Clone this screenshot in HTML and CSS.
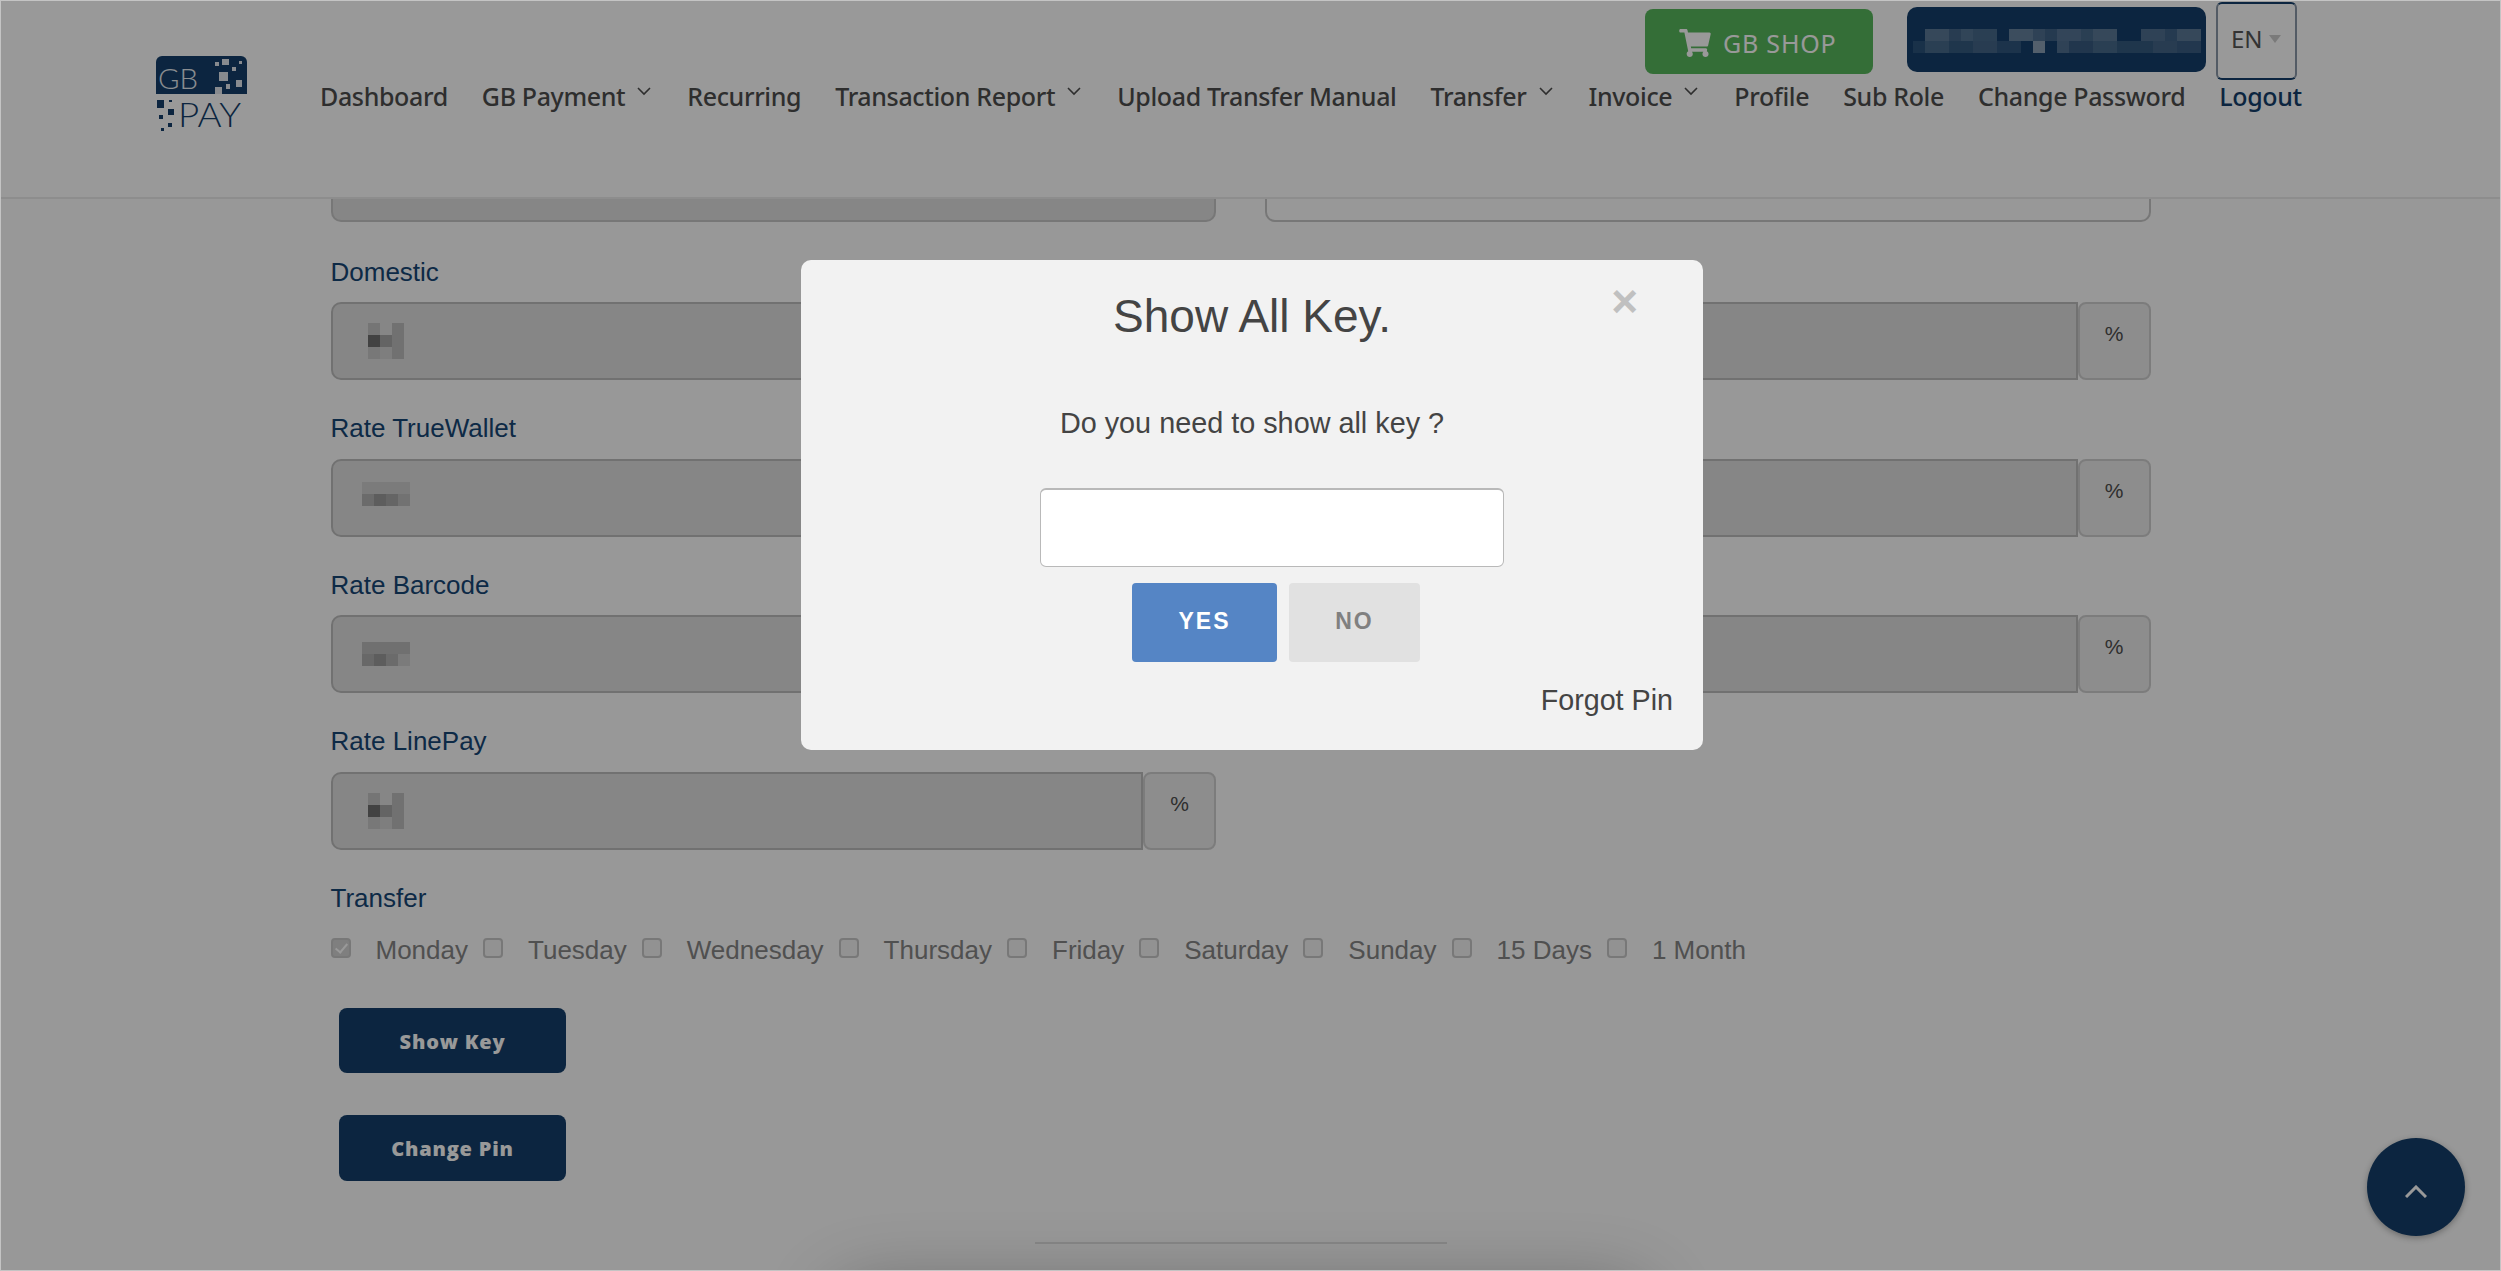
FILE: index.html
```html
<!DOCTYPE html>
<html lang="en">
<head>
<meta charset="utf-8">
<title>Show All Key</title>
<link rel="stylesheet" href="styles.css">
</head>
<body>
<header class="topbar">
  <svg class="logo" viewBox="0 0 91 76" aria-label="GB Pay">
    <path class="logo-bg" d="M0 38V6a6 6 0 0 1 6-6h79a6 6 0 0 1 6 6v32z"/>
    <text class="logo-gb" x="2" y="33" textLength="40" lengthAdjust="spacingAndGlyphs">GB</text>
    <g class="logo-light">
      <rect x="59" y="6" width="4" height="4"/><rect x="66" y="3" width="7" height="6"/><rect x="83" y="5" width="3" height="3"/>
      <rect x="76" y="11" width="4" height="4"/><rect x="63" y="16" width="9" height="9"/><rect x="70" y="28" width="4" height="5"/>
      <rect x="80" y="24" width="6" height="7"/><rect x="59" y="31" width="7" height="7"/>
    </g>
    <g class="logo-dark">
      <rect x="1" y="44" width="7" height="8"/><rect x="13" y="44" width="3" height="2"/><rect x="12" y="53" width="6" height="6"/>
      <rect x="3" y="59" width="4" height="4"/><rect x="12" y="67" width="4" height="4"/><rect x="5" y="72" width="3" height="3"/>
    </g>
    <text class="logo-pay" x="22" y="71" textLength="63" lengthAdjust="spacingAndGlyphs">PAY</text>
  </svg>
  <div class="topbar-main">
    <div class="utilities">
      <a class="shop-btn">
        <svg class="cart" viewBox="0 0 576 512"><path d="M528.12 301.319l47.273-208C578.806 78.301 567.391 64 551.99 64H159.208l-9.166-44.81C147.758 8.021 137.93 0 126.529 0H24C10.745 0 0 10.745 0 24v16c0 13.255 10.745 24 24 24h69.883l70.248 343.435C147.325 417.1 136 435.222 136 456c0 30.928 25.072 56 56 56s56-25.072 56-56c0-15.674-6.447-29.835-16.824-40h209.647C430.447 426.165 424 440.326 424 456c0 30.928 25.072 56 56 56s56-25.072 56-56c0-22.172-12.888-41.332-31.579-50.405l5.517-24.276c3.413-15.018-8.002-29.319-23.403-29.319H218.117l-6.545-32h293.145c11.206 0 20.92-7.754 23.403-18.681z"/></svg>
        GB SHOP
      </a>
      <div class="account">
        <svg class="mosaic" viewBox="0 0 288 24" width="288" height="24">
          <g fill="#fff">
            <rect x="12" y="0" width="24" height="12" opacity=".3"/><rect x="36" y="0" width="12" height="12" opacity=".2"/><rect x="48" y="0" width="12" height="12" opacity=".27"/><rect x="60" y="0" width="24" height="12" opacity=".22"/>
            <rect x="96" y="0" width="24" height="12" opacity=".34"/><rect x="120" y="0" width="12" height="12" opacity=".25"/><rect x="132" y="0" width="12" height="12" opacity=".18"/><rect x="144" y="0" width="24" height="12" opacity=".28"/><rect x="168" y="0" width="12" height="12" opacity=".22"/><rect x="180" y="0" width="24" height="12" opacity=".3"/>
            <rect x="228" y="0" width="24" height="12" opacity=".25"/><rect x="252" y="0" width="12" height="12" opacity=".18"/><rect x="264" y="0" width="24" height="12" opacity=".3"/>
            <rect x="0" y="12" width="12" height="12" opacity=".1"/><rect x="12" y="12" width="24" height="12" opacity=".22"/><rect x="36" y="12" width="24" height="12" opacity=".14"/><rect x="60" y="12" width="24" height="12" opacity=".2"/><rect x="84" y="12" width="24" height="12" opacity=".12"/>
            <rect x="120" y="12" width="12" height="12" opacity=".5"/><rect x="144" y="12" width="12" height="12" opacity=".25"/><rect x="156" y="12" width="24" height="12" opacity=".15"/><rect x="180" y="12" width="24" height="12" opacity=".22"/><rect x="204" y="12" width="36" height="12" opacity=".14"/><rect x="240" y="12" width="24" height="12" opacity=".2"/><rect x="264" y="12" width="24" height="12" opacity=".16"/>
          </g>
        </svg>
      </div>
      <div class="lang"><span>EN</span><i class="caret"></i></div>
    </div>
    <nav class="nav">
      <a>Dashboard</a>
      <a>GB Payment<svg class="chev" viewBox="0 0 14 9"><path d="M1 1l6 6 6-6"/></svg></a>
      <a>Recurring</a>
      <a>Transaction Report<svg class="chev" viewBox="0 0 14 9"><path d="M1 1l6 6 6-6"/></svg></a>
      <a>Upload Transfer Manual</a>
      <a>Transfer<svg class="chev" viewBox="0 0 14 9"><path d="M1 1l6 6 6-6"/></svg></a>
      <a>Invoice<svg class="chev" viewBox="0 0 14 9"><path d="M1 1l6 6 6-6"/></svg></a>
      <a>Profile</a>
      <a>Sub Role</a>
      <a>Change Password</a>
      <a class="logout">Logout</a>
    </nav>
  </div>
</header>

<main class="content">
  <div class="fields">
    <div class="cut cut-filled"></div>
    <div class="cut"></div>

    <div class="field">
      <label>Domestic</label>
      <div class="group">
        <div class="value">
          <svg class="blur" width="36" height="36" viewBox="0 0 3 3"><rect width="1" height="1" fill="#000" opacity=".12"/><rect x="2" width="1" height="1" fill="#000" opacity=".15"/><rect y="1" width="1" height="1" fill="#000" opacity=".5"/><rect x="1" y="1" width="1" height="1" fill="#000" opacity=".25"/><rect x="2" y="1" width="1" height="1" fill="#000" opacity=".15"/><rect y="2" width="1" height="1" fill="#000" opacity=".1"/><rect x="1" y="2" width="1" height="1" fill="#000" opacity=".05"/><rect x="2" y="2" width="1" height="1" fill="#000" opacity=".15"/></svg>
        </div>
        <span class="addon"></span>
      </div>
    </div>
    <div class="field">
      <label>&nbsp;</label>
      <div class="group"><div class="value"></div><span class="addon">%</span></div>
    </div>

    <div class="field">
      <label>Rate TrueWallet</label>
      <div class="group">
        <div class="value tight tw">
          <svg class="blur" width="48" height="24" viewBox="0 0 4 2"><rect width="4" height="1" fill="#000" opacity=".08"/><rect y="1" width="1" height="1" fill="#000" opacity=".2"/><rect x="1" y="1" width="1" height="1" fill="#000" opacity=".3"/><rect x="2" y="1" width="1" height="1" fill="#000" opacity=".24"/><rect x="3" y="1" width="1" height="1" fill="#000" opacity=".14"/></svg>
        </div>
        <span class="addon"></span>
      </div>
    </div>
    <div class="field">
      <label>&nbsp;</label>
      <div class="group"><div class="value"></div><span class="addon">%</span></div>
    </div>

    <div class="field">
      <label>Rate Barcode</label>
      <div class="group">
        <div class="value tight bar">
          <svg class="blur" width="48" height="24" viewBox="0 0 4 2"><rect y="0" width="4" height="1" fill="#000" opacity=".16"/><rect y="1" width="1" height="1" fill="#000" opacity=".22"/><rect x="1" y="1" width="1" height="1" fill="#000" opacity=".3"/><rect x="2" y="1" width="1" height="1" fill="#000" opacity=".2"/><rect x="3" y="1" width="1" height="1" fill="#000" opacity=".08"/></svg>
        </div>
        <span class="addon"></span>
      </div>
    </div>
    <div class="field">
      <label>&nbsp;</label>
      <div class="group"><div class="value"></div><span class="addon">%</span></div>
    </div>

    <div class="field">
      <label>Rate LinePay</label>
      <div class="group">
        <div class="value">
          <svg class="blur" width="36" height="36" viewBox="0 0 3 3"><rect width="1" height="1" fill="#000" opacity=".12"/><rect x="2" width="1" height="1" fill="#000" opacity=".15"/><rect y="1" width="1" height="1" fill="#000" opacity=".5"/><rect x="1" y="1" width="1" height="1" fill="#000" opacity=".25"/><rect x="2" y="1" width="1" height="1" fill="#000" opacity=".15"/><rect y="2" width="1" height="1" fill="#000" opacity=".1"/><rect x="1" y="2" width="1" height="1" fill="#000" opacity=".05"/><rect x="2" y="2" width="1" height="1" fill="#000" opacity=".15"/></svg>
        </div>
        <span class="addon">%</span>
      </div>
    </div>
  </div>

  <section class="transfer">
    <label>Transfer</label>
    <div class="days">
      <span class="day"><input type="checkbox" checked disabled>Monday</span>
      <span class="day"><input type="checkbox" disabled>Tuesday</span>
      <span class="day"><input type="checkbox" disabled>Wednesday</span>
      <span class="day"><input type="checkbox" disabled>Thursday</span>
      <span class="day"><input type="checkbox" disabled>Friday</span>
      <span class="day"><input type="checkbox" disabled>Saturday</span>
      <span class="day"><input type="checkbox" disabled>Sunday</span>
      <span class="day"><input type="checkbox" disabled>15 Days</span>
      <span class="day"><input type="checkbox" disabled>1 Month</span>
    </div>
  </section>

  <div class="actions">
    <button class="action">Show Key</button>
    <button class="action">Change Pin</button>
  </div>

  <footer class="foot">
    <div class="foot-line"></div>
    <div class="foot-glow"></div>
  </footer>
</main>

<button class="to-top" aria-label="Back to top">
  <svg viewBox="0 0 22 13" width="22" height="13"><path d="M1 12L11 2l10 10"/></svg>
</button>

<div class="overlay">
  <div class="modal">
    <span class="close">&times;</span>
    <h2 class="modal-title">Show All Key.</h2>
    <p class="modal-text">Do you need to show all key ?</p>
    <input class="pin" type="password">
    <div class="modal-btns">
      <button class="btn-yes">YES</button>
      <button class="btn-no">NO</button>
    </div>
    <a class="forgot">Forgot Pin</a>
  </div>
</div>
</body>
</html>
```
FILE: styles.css
```css
* { box-sizing: border-box; }
html, body { margin: 0; height: 100%; }
body {
  height: 1271px;
  overflow: hidden;
  background: #fdfdfd;
  color: #4e4e4e;
  font-family: "Liberation Sans", Arial, sans-serif;
}

/* header */
.topbar {
  display: flex;
  align-items: flex-start;
  height: 199px;
  padding: 0 199px 0 156px;
  background: #fff;
  border-bottom: 2px solid #ececec;
  position: relative;
  z-index: 2;
}
.logo { width: 91px; height: 76px; margin-top: 56px; flex: none; overflow: visible; }
.logo-bg { fill: #143f6b; }
.logo-light rect { fill: #e3e8ee; }
.logo-dark rect { fill: #143f6b; }
.logo-gb { font: 300 28px "Lato", "Open Sans", sans-serif; fill: #e8edf2; }
.logo-pay { font: 300 33px "Lato", "Open Sans", sans-serif; fill: #143f6b; }

.topbar-main { flex: 1; min-width: 0; margin-left: 73px; display: flex; flex-direction: column; }
.utilities {
  display: flex;
  justify-content: flex-end;
  align-items: flex-start;
  height: 80px;
  padding-right: 5px;
}
.shop-btn {
  display: flex;
  align-items: center;
  gap: 12px;
  width: 228px;
  height: 65px;
  margin-top: 9px;
  padding: 2px 0 0 34px;
  border-radius: 8px;
  background: #58b75d;
  color: #fff;
  font: 400 25px "Noto Sans", sans-serif;
  letter-spacing: .8px;
}
.cart { width: 32px; height: 28px; fill: #fff; }
.account {
  display: flex;
  align-items: center;
  width: 299px;
  height: 65px;
  margin: 7px 0 0 34px;
  padding-left: 6px;
  border-radius: 10px;
  background: #143f6b;
}
.mosaic { display: block; margin-top: 3px; }
.lang {
  display: flex;
  align-items: center;
  gap: 6px;
  width: 81px;
  height: 78px;
  margin: 2px 0 0 10px;
  padding: 0 0 5px 13px;
  border: 2px solid #143f6b;
  border-left-color: #8a98a8;
  border-right-color: #8a98a8;
  border-radius: 6px;
  color: #555;
  font: 400 24px "Noto Sans", sans-serif;
}
.caret { width: 0; height: 0; border: 6px solid transparent; border-top: 8px solid #ccc; border-bottom: 0; }

.nav { display: flex; align-items: center; gap: 34px; height: 32px; }
.nav a {
  display: flex;
  align-items: center;
  color: #4e4e4e;
  font: 500 25px/32px "Noto Sans", sans-serif;
  letter-spacing: -.36px;
  white-space: nowrap;
}
.nav .logout { color: #143f6b; }
.chev { width: 14px; height: 9px; margin: -10px 0 0 12px; fill: none; stroke: #4e4e4e; stroke-width: 1.6; }
.nav a:has(.chev) { padding-right: 2px; }

/* form */
.content { padding: 0 350px 0 330.5px; }
.fields { display: grid; grid-template-columns: 885.5px 885.5px; column-gap: 49px; row-gap: 32px; }
.cut {
  height: 23px;
  margin-bottom: 1.5px;
  border: 2px solid #c6c6c6;
  border-top: 0;
  border-radius: 0 0 10px 10px;
}
.cut-filled { background: #dfdfdf; }
.field label, .transfer label {
  display: block;
  height: 33px;
  margin-bottom: 13.5px;
  color: #164675;
  font-size: 26px;
  line-height: 33px;
}
.group { display: flex; height: 78px; }
.value {
  flex: 1;
  display: flex;
  align-items: center;
  padding: 0 0 0 35px;
  background: #dfdfdf;
  border: 2px solid #bdbdbd;
  border-radius: 10px 0 0 10px;
}
.value.tight { padding-left: 29px; }
.value.tw { padding-bottom: 7px; }
.value.bar { padding-bottom: 1px; }
.blur { display: block; }
.addon {
  width: 73px;
  padding-bottom: 14px;
  display: flex;
  align-items: center;
  justify-content: center;
  background: #ebebeb;
  border: 2px solid #cfcfcf;
  border-radius: 8px;
  color: #4e4e4e;
  font-size: 21px;
}
.transfer { margin-top: 32.5px; }
.transfer label { margin-bottom: 19.5px; }
.days { display: flex; align-items: center; height: 30px; gap: 15px; }
.day { display: flex; align-items: center; gap: 25px; color: #858585; font-size: 26px; line-height: 30px; }
.day input {
  appearance: none;
  width: 20px;
  height: 20px;
  margin: -4px 0 0;
  background: #f4f4f4;
  border: 2px solid #c8c8c8;
  border-radius: 4px;
}
.day input:checked { background: #d4d4d4; position: relative; }
.day input:checked::after {
  content: "";
  position: absolute;
  left: 5px;
  top: 1px;
  width: 5px;
  height: 10px;
  border: solid #fff;
  border-width: 0 2px 2px 0;
  transform: rotate(40deg);
}
.actions { display: flex; flex-direction: column; align-items: flex-start; gap: 42px; margin: 43px 0 0 8.5px; }
.action {
  width: 227px;
  height: 65.5px;
  padding: 2px 0 0;
  border: 0;
  border-radius: 8px;
  background: #143f6b;
  color: #fff;
  font: 800 20px "Open Sans", sans-serif;
  letter-spacing: .8px;
}
.foot-line { width: 412px; height: 2px; margin: 61px auto 0; background: #e0e0e0; }
.foot-glow { width: 800px; height: 60px; margin: 52px auto 0; border-radius: 30px; background: #b0b0b0; box-shadow: 0 0 70px 10px rgba(0,0,0,.3); }

.to-top {
  position: fixed;
  right: 36px;
  bottom: 35px;
  width: 98px;
  height: 98px;
  padding: 8px 0 0;
  border: 0;
  border-radius: 50%;
  background: #143f6b;
  box-shadow: 0 2px 6px rgba(0,0,0,.3);
  z-index: 3;
}
.to-top svg { display: block; margin: 0 auto; fill: none; stroke: #fff; stroke-width: 3; }

/* modal */
.overlay {
  position: fixed;
  inset: 0;
  z-index: 10;
  display: flex;
  align-items: flex-start;
  justify-content: center;
  padding: 260px 0 0 3px;
  background: rgba(0,0,0,.4);
  box-shadow: inset 0 0 0 1px #c4c4c4;
}
.modal {
  position: relative;
  display: flex;
  flex-direction: column;
  align-items: center;
  width: 902px;
  height: 490px;
  padding-top: 30px;
  border-radius: 10px;
  background: #f2f2f2;
  color: #444;
}
.close {
  position: absolute;
  top: 15px;
  right: 65px;
  color: #c0c0c0;
  font-size: 46px;
  font-weight: 700;
  line-height: 52px;
}
.modal-title { margin: 0; font-size: 46px; font-weight: 400; line-height: 52px; }
.modal-text { margin: 63px 0 0; font-size: 28.8px; line-height: 36px; }
.pin {
  display: block;
  width: 464px;
  height: 79px;
  margin: 47px 0 0 40px;
  background: #fff;
  border: 2px solid #b9b9b9;
  border-width: 2px 1.5px 1.5px;
  border-radius: 6px;
}
.modal-btns { display: flex; gap: 12px; margin: 16px 0 0 48px; }
.modal-btns button {
  height: 79px;
  padding: 0 0 2px;
  border: 0;
  border-radius: 4px;
  font: 700 23px "Liberation Sans", Arial, sans-serif;
  letter-spacing: 2px;
}
.btn-yes { width: 145px; background: #5585c5; color: #fff; }
.btn-no { width: 131px; background: #e1e1e1; color: #808080; }
.forgot { align-self: flex-end; margin: 21px 30px 0 0; font-size: 28.7px; line-height: 34px; color: #444; }
```
